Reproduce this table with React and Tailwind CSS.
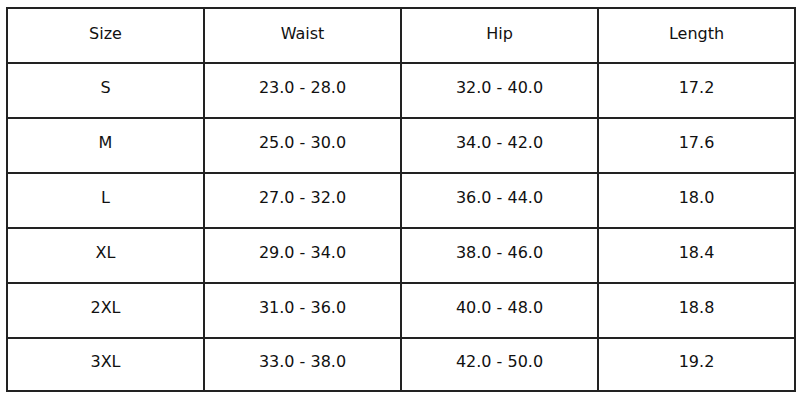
import React from 'react';

const rows = [
    ['S', '23.0 - 28.0', '32.0 - 40.0', '17.2'],
    ['M', '25.0 - 30.0', '34.0 - 42.0', '17.6'],
    ['L', '27.0 - 32.0', '36.0 - 44.0', '18.0'],
    ['XL', '29.0 - 34.0', '38.0 - 46.0', '18.4'],
    ['2XL', '31.0 - 36.0', '40.0 - 48.0', '18.8'],
    ['3XL', '33.0 - 38.0', '42.0 - 50.0', '19.2'],
];

const headers = ['Size', 'Waist', 'Hip', 'Length'];

const App = () => {
    return (
        <div className="w-[800px] h-[400px] bg-white pt-[7px] pl-[6px]">
            <table className="w-[790px] border-collapse border-2 border-[#555] text-[16px] text-[#111] font-['DejaVu_Sans',sans-serif] table-fixed">
                <thead>
                    <tr className="h-[55px]">
                        {headers.map(h => (
                            <th key={h} className="border-2 border-[#222] font-normal text-center align-middle pb-[3px]">
                                {h}
                            </th>
                        ))}
                    </tr>
                </thead>
                <tbody>
                    {rows.map((r, ri) => (
                        <tr key={r[0]} className={ri === rows.length - 1 ? 'h-[53px]' : 'h-[55px]'}>
                            {r.map((c, i) => (
                                <td key={i} className="border-2 border-[#222] text-center align-middle pb-[5px]">
                                    {c}
                                </td>
                            ))}
                        </tr>
                    ))}
                </tbody>
            </table>
        </div>
    );
};

export default App;
